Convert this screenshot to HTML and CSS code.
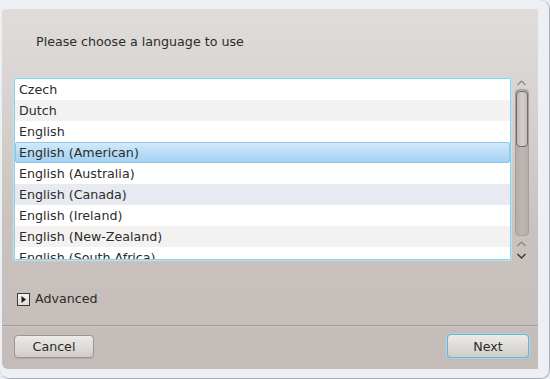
FILE: index.html
```html
<!DOCTYPE html>
<html>
<head>
<meta charset="utf-8">
<link rel="stylesheet" href="styles.css">
</head>
<body>
<div class="frame">
  <div class="dialog">
    <div class="prompt">Please choose a language to use</div>
    <div class="list-area">
      <div class="listbox">
        <div class="row">Czech</div>
        <div class="row alt">Dutch</div>
        <div class="row">English</div>
        <div class="row selected">English (American)</div>
        <div class="row">English (Australia)</div>
        <div class="row hover">English (Canada)</div>
        <div class="row">English (Ireland)</div>
        <div class="row alt">English (New-Zealand)</div>
        <div class="row">English (South Africa)</div>
      </div>
      <div class="scrollbar">
        <svg class="caret" width="11" height="6" viewBox="0 0 11 6"><path d="M1.5 5 L5.5 1 L9.5 5" fill="none" stroke="#8a8582" stroke-width="1.2"/></svg>
        <div class="track"><div class="thumb"></div></div>
        <svg class="caret caret-low" width="11" height="6" viewBox="0 0 11 6"><path d="M1.5 5 L5.5 1 L9.5 5" fill="none" stroke="#8a8582" stroke-width="1.2"/></svg>
        <svg class="caret caret-down" width="11" height="6" viewBox="0 0 11 6"><path d="M1.5 1 L5.5 5 L9.5 1" fill="none" stroke="#3a3836" stroke-width="1.4"/></svg>
      </div>
    </div>
    <div class="advanced">
      <span class="exp-icon"><svg width="11" height="11" viewBox="0 0 11 11"><path d="M3.5 2 L8 5.5 L3.5 9 Z" fill="#1e1d1c"/></svg></span>
      <span>Advanced</span>
    </div>
    <div class="separator"></div>
    <div class="buttons">
      <button class="btn">Cancel</button>
      <button class="btn btn-default">Next</button>
    </div>
  </div>
</div>
</body>
</html>
```
FILE: styles.css
```css
html, body {
  margin: 0;
  padding: 0;
  width: 550px;
  height: 379px;
  overflow: hidden;
  background: #e9edf2;
}
.frame {
  box-sizing: border-box;
  width: 550px;
  height: 379px;
  padding: 9px 10px 9px 2px;
  background: #ecf0f4;
  border-right: 1px solid #a7aeb7;
  border-bottom: 1px solid #a7aeb7;
  border-radius: 0 9px 9px 9px;
  font-family: "DejaVu Sans", sans-serif;
  font-size: 12.67px;
  color: #2d2b2a;
}
.dialog {
  box-sizing: border-box;
  width: 536px;
  height: 360px;
  background: linear-gradient(to bottom, #dfdcd9 0%, #d8d3d0 25%, #c9c2be 60%, #c3bcb8 100%);
  border-radius: 4px 0 0 6px;
  display: flex;
  flex-direction: column;
}
.prompt {
  line-height: 16px;
  margin: 25px 0 0 34px;
}
.list-area {
  display: flex;
  margin: 28px 0 0 12px;
  height: 182px;
}
.listbox {
  box-sizing: border-box;
  width: 497px;
  height: 182px;
  border: 1px solid #8fcfe8;
  box-shadow: 0 0 1px 1px #bde3f1;
  border-radius: 2px;
  background: #fff;
  overflow: hidden;
}
.row {
  height: 21px;
  line-height: 21px;
  padding-left: 4px;
  white-space: nowrap;
  background: #ffffff;
}
.row.alt {
  background: #f3f2f1;
}
.row.hover {
  background: #e7ebf1;
}
.row.selected {
  box-sizing: border-box;
  background: linear-gradient(to bottom, #d2eafa 0%, #b9ddf6 50%, #a3d1f1 100%);
  border: 1px solid #93c7ea;
  border-radius: 2px;
  line-height: 19px;
  padding-left: 3px;
}
.scrollbar {
  width: 15px;
  margin-left: 3px;
  display: flex;
  flex-direction: column;
  align-items: center;
  padding-top: 2px;
}
.caret {
  display: block;
}
.track {
  box-sizing: border-box;
  margin-top: 3px;
  width: 14px;
  height: 147px;
  border: 1px solid #a59e9a;
  border-radius: 4px;
  background: linear-gradient(to right, #b3aca8, #bdb6b2 50%, #b3aca8);
}
.thumb {
  box-sizing: border-box;
  margin: 1px 0 0 0;
  width: 12px;
  height: 56px;
  border: 1px solid #6f6a67;
  border-radius: 4px;
  background: linear-gradient(to right, #bfb9b6, #d3cfcc 50%, #c3bdba);
}
.caret-low {
  margin-top: 5px;
}
.caret-down {
  margin-top: 6px;
}
.advanced {
  display: flex;
  align-items: center;
  margin: 31px 0 0 15px;
  line-height: 16px;
}
.exp-icon {
  box-sizing: border-box;
  width: 13px;
  height: 13px;
  border: 1px solid #3c3a38;
  background: linear-gradient(to bottom, #f5f4f3, #dedbd8);
  display: flex;
  align-items: center;
  justify-content: center;
  margin-right: 5px;
}
.exp-icon svg {
  display: block;
}
.separator {
  margin-top: 18px;
  height: 1px;
  background: #a39d99;
  border-bottom: 1px solid #cdc7c3;
}
.buttons {
  display: flex;
  justify-content: space-between;
  align-items: flex-start;
  padding: 0 9px 0 12px;
  margin-top: 7px;
}
.btn {
  box-sizing: border-box;
  font-family: "DejaVu Sans", sans-serif;
  font-size: 12.67px;
  color: #2d2b2a;
  width: 80px;
  height: 23px;
  margin-top: 1px;
  padding: 0;
  border: 1px solid #9c9692;
  border-radius: 4px;
  background: linear-gradient(to bottom, #ecebe9 0%, #dcd9d6 60%, #d0ccc9 100%);
  box-shadow: 0 1px 0 #b2aba7;
}
.btn-default {
  width: 82px;
  height: 24px;
  margin-top: 0;
  border: 1px solid #6fb0d4;
  box-shadow: 0 0 0 1px #a9d6ec, 0 1px 1px #8fa9b8;
}
```
